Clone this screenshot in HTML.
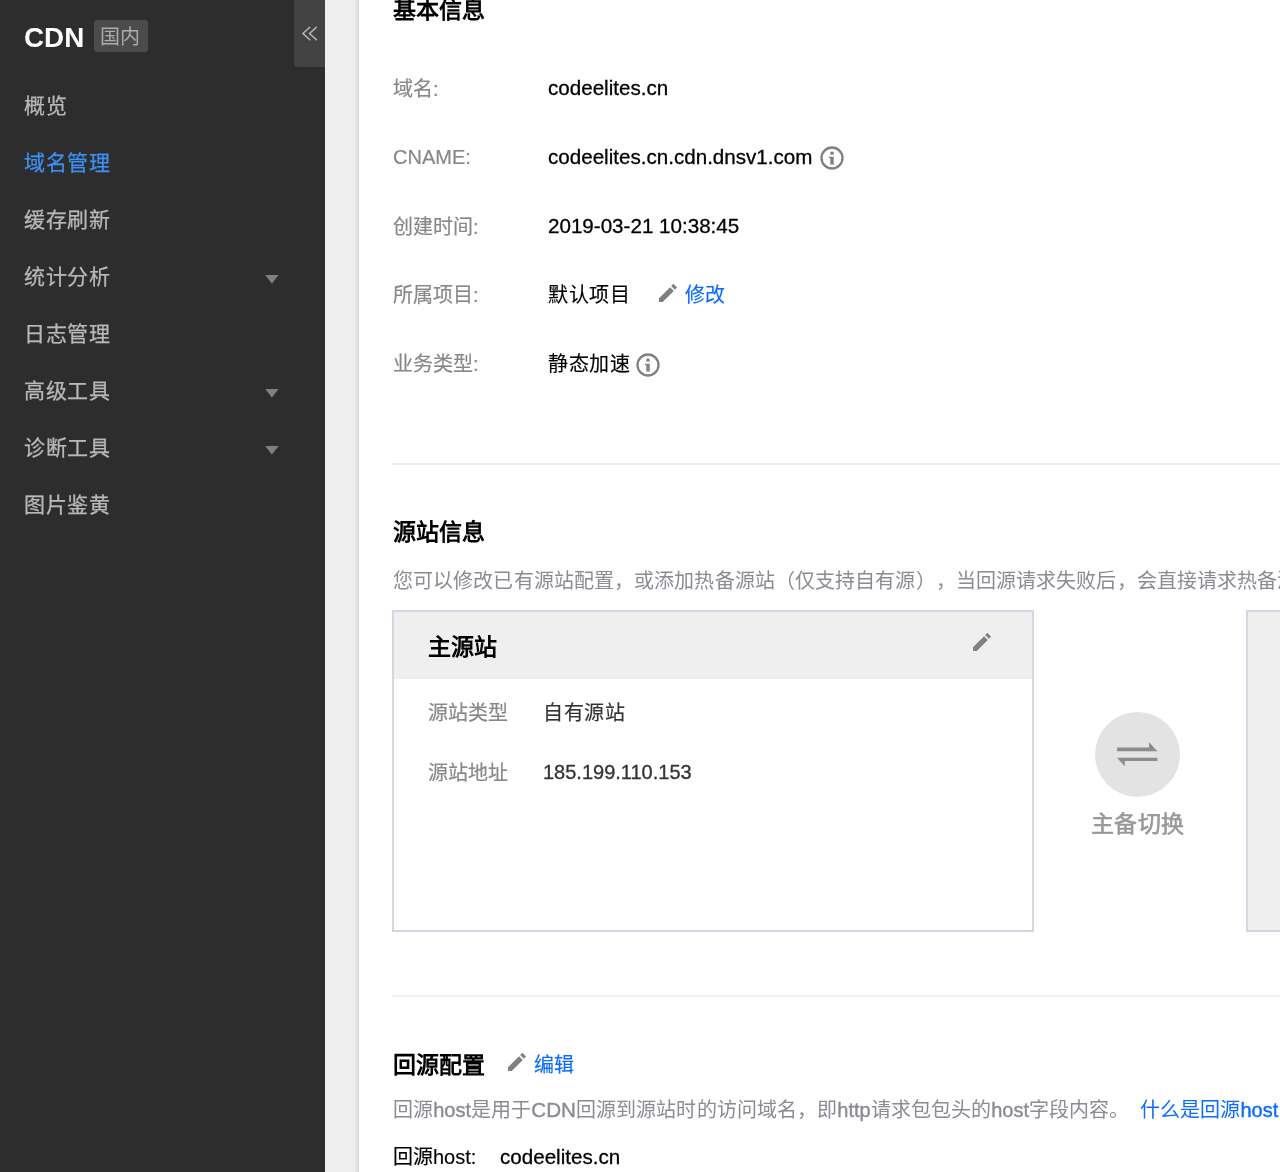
<!DOCTYPE html>
<html lang="zh-CN"><head><meta charset="utf-8">
<style>
*{margin:0;padding:0;box-sizing:border-box}
html,body{text-spacing-trim:space-all;width:1280px;height:1172px;overflow:hidden;background:#fff;font-family:"Liberation Sans",sans-serif}
.abs{position:absolute;white-space:nowrap;will-change:transform}
#side{position:absolute;left:0;top:0;width:325px;height:1172px;background:#2d2d2d}
#logo{left:24px;top:22.5px;font-size:27.8px;font-weight:bold;color:#fff;line-height:30px}
#badge{left:94px;top:20px;width:54px;height:32px;background:#4b4b4b;border-radius:3px;color:#acacac;font-size:20px;line-height:34px;text-align:center;text-indent:-2px;letter-spacing:0.5px}
#collapse{left:294px;top:0;width:31px;height:67px;background:#434343;border-bottom-left-radius:4px}
.mi{left:24px;font-size:21px;letter-spacing:0.5px;-webkit-text-stroke:0.25px currentColor;color:#b9b9b9;line-height:24px}
.mi.act{color:#3d90f5}
.arr{position:absolute;left:265px;width:14px;height:9px}
#strip{position:absolute;left:325px;top:0;width:34px;height:1172px;background:linear-gradient(to right,#efefef 0,#efefef 28px,#e8e8e8 31px,#dadada 33px,#d6d6d6 34px)}
.h{font-size:23px;font-weight:bold;color:#000;line-height:26px}
.lbl{font-size:20px;color:#888;line-height:22px;-webkit-text-stroke:0.2px currentColor}
.val{font-size:20.6px;color:#000;line-height:22px;-webkit-text-stroke:0.3px currentColor}
.desc{font-size:20px;color:#8a8c93;line-height:22px;letter-spacing:0.1px}
.cv{font-size:20px;color:#000;line-height:22px;letter-spacing:0.5px;-webkit-text-stroke:0.15px currentColor}
.blue{color:#0a6cff}
.lb{font-weight:normal;font-size:20px;-webkit-text-stroke:0.4px currentColor;letter-spacing:0}
.lc{font-weight:normal;font-size:20.6px;-webkit-text-stroke:0.4px currentColor;letter-spacing:0}
.sep{position:absolute;left:392px;width:888px;height:2px;background:#eceef1}
svg{position:absolute;overflow:visible}
#card1{position:absolute;left:392px;top:610px;width:642px;height:322px;border:2px solid #d3d7e1;background:#fff}
#card1 .hd{position:absolute;left:0;top:0;width:638px;height:67px;background:#efefef}
#card2{position:absolute;left:1246px;top:610px;width:100px;height:322px;border:2px solid #d3d7e1;background:#efefef}
#circ{position:absolute;left:1095px;top:712px;width:85px;height:85px;border-radius:50%;background:#e3e3e3}
</style></head><body>
<div id="side">
  <div id="logo" class="abs">CDN</div>
  <div id="badge" class="abs">国内</div>
  <div id="collapse" class="abs"></div>
  <svg style="left:300px;top:25px" width="20" height="18" viewBox="0 0 20 18"><path d="M9.8 2.2 L2.9 8.5 L9.8 14.8 M16.4 2.2 L9.5 8.5 L16.4 14.8" fill="none" stroke="#bdbdbd" stroke-width="1.4" stroke-linejoin="round" stroke-linecap="round"/></svg>
  <div class="abs mi" style="top:94px">概览</div>
  <div class="abs mi act" style="top:151px">域名管理</div>
  <div class="abs mi" style="top:208px">缓存刷新</div>
  <div class="abs mi" style="top:265px">统计分析</div><svg class="arr" style="top:275px" width="14" height="9" viewBox="0 0 14 9"><path d="M0.2 0H13.6L6.9 8.4Z" fill="#808080"/></svg>
  <div class="abs mi" style="top:322px">日志管理</div>
  <div class="abs mi" style="top:379px">高级工具</div><svg class="arr" style="top:389px" width="14" height="9" viewBox="0 0 14 9"><path d="M0.2 0H13.6L6.9 8.4Z" fill="#808080"/></svg>
  <div class="abs mi" style="top:436px">诊断工具</div><svg class="arr" style="top:446px" width="14" height="9" viewBox="0 0 14 9"><path d="M0.2 0H13.6L6.9 8.4Z" fill="#808080"/></svg>
  <div class="abs mi" style="top:493px">图片鉴黄</div>
</div>
<div id="strip"></div>

<div class="abs h" style="left:393px;top:-3px">基本信息</div>
<div class="abs lbl" style="left:393px;top:78px">域名:</div>
<div class="abs val" style="left:548px;top:77px">codeelites.cn</div>
<div class="abs lbl" style="left:393px;top:146px">CNAME:</div>
<div class="abs val" style="left:548px;top:146px">codeelites.cn.cdn.dnsv1.com</div>
<svg style="left:820px;top:145.8px" width="24" height="24" viewBox="0 0 24 24"><circle cx="12" cy="12" r="10.5" fill="none" stroke="#808080" stroke-width="2.3"/><rect x="10.3" y="5.8" width="3.4" height="2.8" fill="#808080"/><path d="M8.6 10.8H13.7V17.4L14.5 18.5H10.3V12.3L9.1 12.1Z" fill="#808080"/></svg>
<div class="abs lbl" style="left:393px;top:216px">创建时间:</div>
<div class="abs val" style="left:548px;top:215px">2019-03-21 10:38:45</div>
<div class="abs lbl" style="left:393px;top:284px">所属项目:</div>
<div class="abs cv" style="left:548px;top:284px">默认项目</div>
<svg style="left:655.5px;top:280.5px" width="24" height="24" viewBox="0 0 24 24"><path d="M3 17.25V21h3.75L17.81 9.94l-3.75-3.75L3 17.25zM15.13 4.96L17.3 2.8L21.05 6.55L18.88 8.71z" fill="#808080"/></svg>
<div class="abs cv blue" style="left:685px;top:284px;letter-spacing:0">修改</div>
<div class="abs lbl" style="left:393px;top:353px">业务类型:</div>
<div class="abs cv" style="left:548px;top:353px">静态加速</div>
<svg style="left:635.5px;top:353.4px" width="24" height="24" viewBox="0 0 24 24"><circle cx="12" cy="12" r="10.5" fill="none" stroke="#808080" stroke-width="2.3"/><rect x="10.3" y="5.8" width="3.4" height="2.8" fill="#808080"/><path d="M8.6 10.8H13.7V17.4L14.5 18.5H10.3V12.3L9.1 12.1Z" fill="#808080"/></svg>

<div class="sep" style="top:463px"></div>
<div class="abs h" style="left:393px;top:519px">源站信息</div>
<div class="abs desc" style="left:393px;top:570px">您可以修改已有源站配置，或添加热备源站（仅支持自有源），当回源请求失败后，会直接请求热备源站。</div>

<div id="card1"><div class="hd"></div></div>
<div class="abs h" style="left:428px;top:634px">主源站</div>
<svg style="left:970px;top:629.5px" width="24" height="24" viewBox="0 0 24 24"><path d="M3 17.25V21h3.75L17.81 9.94l-3.75-3.75L3 17.25zM15.13 4.96L17.3 2.8L21.05 6.55L18.88 8.71z" fill="#808080"/></svg>
<div class="abs lbl" style="left:428px;top:702px">源站类型</div>
<div class="abs cv" style="left:543px;top:702px;color:#333">自有源站</div>
<div class="abs lbl" style="left:428px;top:762px">源站地址</div>
<div class="abs val" style="left:543px;top:761px;color:#333;font-size:20px">185.199.110.153</div>

<div id="circ"></div>
<svg style="left:1110px;top:735px" width="55" height="40" viewBox="0 0 55 40"><path d="M7.1 12.6H39V7.2L47.4 16.2H7.1Z M7.1 22.8H47.4V26.1H14.8V31.5Z" fill="#8c8c8c"/></svg>
<div class="abs" style="left:1091px;top:812px;font-size:23px;font-weight:normal;color:#999;line-height:24px;letter-spacing:0.4px;-webkit-text-stroke:0.6px #999">主备切换</div>
<div id="card2"></div>

<div class="sep" style="top:995px"></div>
<div class="abs h" style="left:393px;top:1052px">回源配置</div>
<svg style="left:505px;top:1050px" width="24" height="24" viewBox="0 0 24 24"><path d="M3 17.25V21h3.75L17.81 9.94l-3.75-3.75L3 17.25zM15.13 4.96L17.3 2.8L21.05 6.55L18.88 8.71z" fill="#808080"/></svg>
<div class="abs cv blue" style="left:534px;top:1054px;letter-spacing:0">编辑</div>
<div class="abs desc" id="d2" style="left:393px;top:1099px">回源<b class="lb">host</b>是用于<b class="lc">CDN</b>回源到源站时的访问域名，即<b class="lb">http</b>请求包包头的<b class="lb">host</b>字段内容。</div><div class="abs desc blue" id="lnk" style="left:1140px;top:1099px">什么是回源<b class="lb">host</b></div>
<div class="abs cv" style="left:393px;top:1146px;letter-spacing:0">回源host:</div>
<div class="abs val" style="left:500px;top:1146px">codeelites.cn</div>
</body></html>
